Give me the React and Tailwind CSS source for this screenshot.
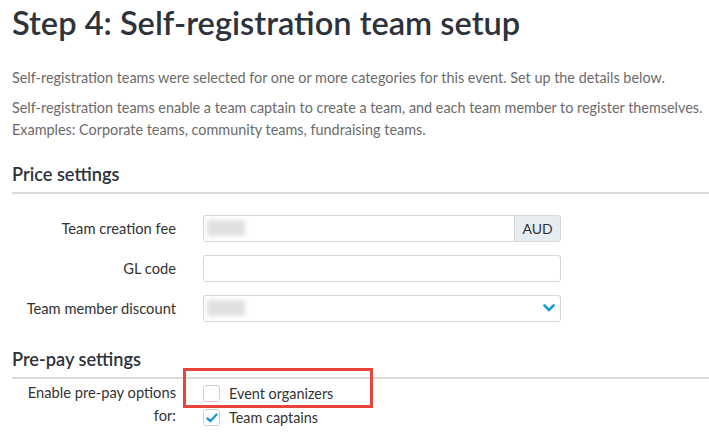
import React from 'react';

const Blur = ({ w = 'w-[38px]' }) => (
  <span className={`inline-block h-[16px] ${w} bg-[#d9d9d9] blur-[2px] opacity-80`}></span>
);

const Row = ({ label, children }) => (
  <div className="flex items-center">
    <label className="w-[164px] text-right text-[14.7px] text-[#333]">{label}</label>
    <div className="ml-[27px] w-[358px]">{children}</div>
  </div>
);

const App = () => {
  return (
    <div className="w-[709px] h-[440px] overflow-hidden bg-white font-['Lato',sans-serif] pl-[12px]">
      <h1 className="text-[32.6px] font-semibold text-[#2e323a] leading-none pt-[7px]">
        Step 4: Self-registration team setup
      </h1>

      <div className="mt-[27px] text-[14.4px] text-[#6b6b6b] leading-[22px]">
        <p>Self-registration teams were selected for one or more categories for this event. Set up the details below.</p>
        <p className="mt-[8px]">
          Self-registration teams enable a team captain to create a team, and each team member to register themselves.
          <br />
          Examples: Corporate teams, community teams, fundraising teams.
        </p>
      </div>

      <h2 className="mt-[22px] text-[18.2px] font-semibold text-[#2e323a] leading-[22px]">Price settings</h2>
      <div className="mt-[7px] h-[2px] bg-[#dadada]"></div>

      <div className="mt-[21px] flex flex-col gap-[13px]">
        <Row label="Team creation fee">
          <div className="flex h-[27px] border border-[#d6d6d6] rounded-[3px] overflow-hidden">
            <div className="flex-1 flex items-center pl-[3px]">
              <Blur />
            </div>
            <div className="w-[46px] flex items-center justify-center bg-[#e6ecef] border-l border-[#d6d6d6] text-[14px] text-[#333]">
              AUD
            </div>
          </div>
        </Row>
        <Row label="GL code">
          <div className="h-[27px] border border-[#d6d6d6] rounded-[3px]"></div>
        </Row>
        <Row label="Team member discount">
          <div className="flex items-center justify-between h-[27px] border border-[#d6d6d6] rounded-[3px] pl-[3px] pr-[5px]">
            <Blur />
            <svg width="12" height="8" viewBox="0 0 12 8">
              <path d="M1.5 1.5 L6 6 L10.5 1.5" fill="none" stroke="#1a9ad6" strokeWidth="2.6" strokeLinecap="round" strokeLinejoin="round" />
            </svg>
          </div>
        </Row>
      </div>

      <h2 className="mt-[26px] text-[18.2px] font-semibold text-[#2e323a] leading-[22px]">Pre-pay settings</h2>
      <div className="mt-[7px] h-[2px] bg-[#dadada]"></div>

      <div className="flex mt-[1px]">
        <div className="w-[164px] text-right text-[14.7px] text-[#333] leading-[23px] pt-[1px]">
          Enable pre-pay options
          <br />
          for:
        </div>
        <div className="relative ml-[27px] flex flex-col gap-[4px] pt-[4px]">
          <div className="flex items-center gap-[9px] leading-[20px]">
            <span className="w-[17px] h-[17px] border border-[#cfcfcf] rounded-[3px] bg-white"></span>
            <span className="text-[14.4px] text-[#333]">Event organizers</span>
          </div>
          <div className="flex items-center gap-[9px] leading-[20px]">
            <span className="w-[17px] h-[17px] border border-[#cfcfcf] rounded-[3px] bg-white flex items-center justify-center">
              <svg width="12" height="10" viewBox="0 0 12 10">
                <path d="M1.5 5.5 L4.5 8 L10.5 1.5" fill="none" stroke="#1a9ad6" strokeWidth="2.4" strokeLinecap="round" strokeLinejoin="round" />
              </svg>
            </span>
            <span className="text-[14.4px] text-[#333]">Team captains</span>
          </div>
          <div className="absolute left-[-20px] top-[-12px] w-[190px] h-[40px] border-[3px] border-[#e8443c]"></div>
        </div>
      </div>
    </div>
  );
};

export default App;
